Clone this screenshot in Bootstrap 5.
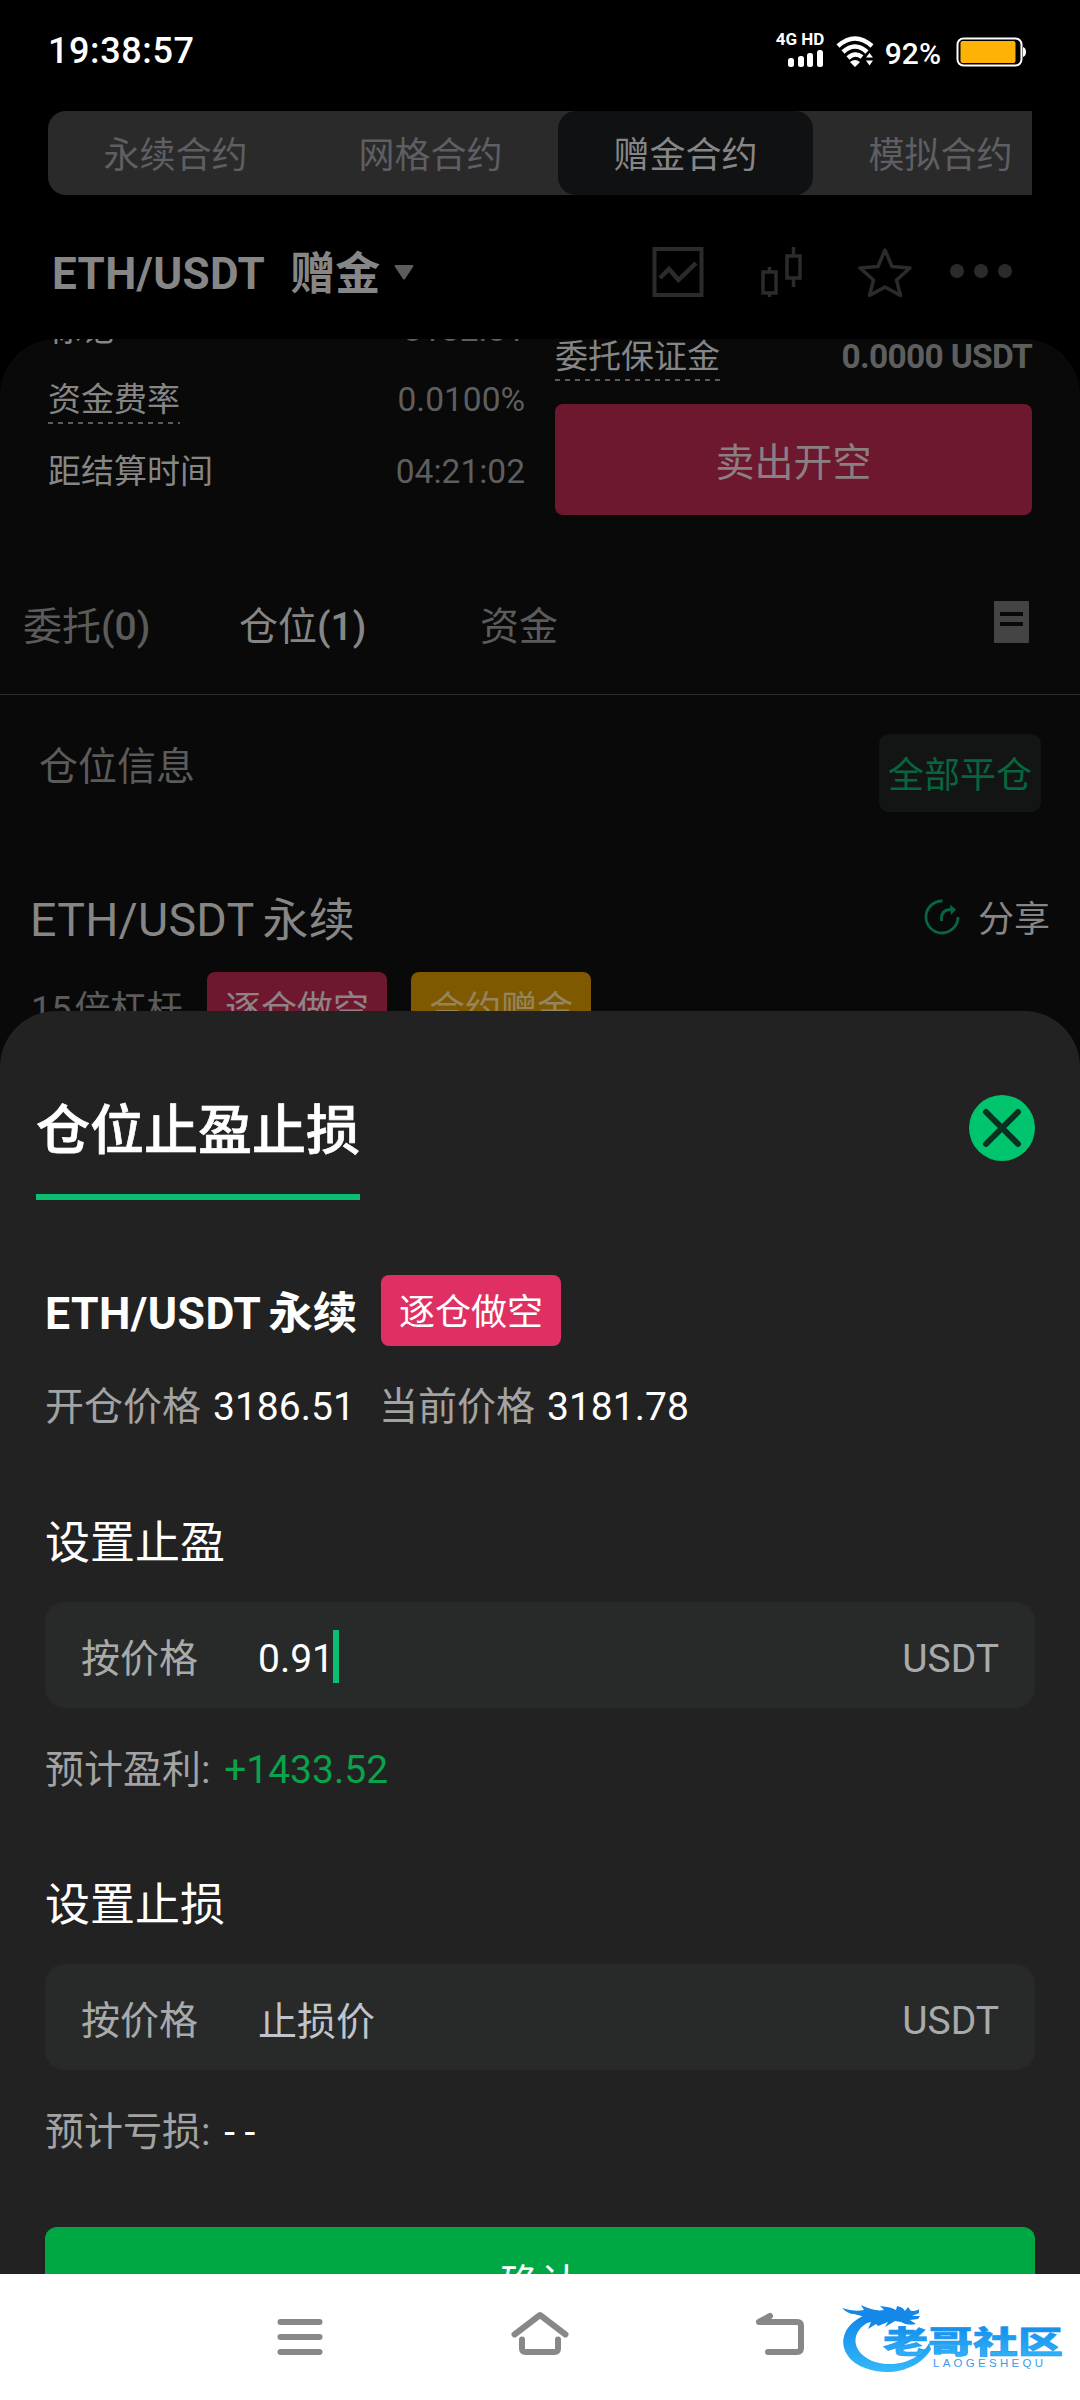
<!DOCTYPE html>
<html lang="zh-CN">
<head>
<meta charset="utf-8">
<meta name="viewport" content="width=device-width, initial-scale=1">
<title>仓位止盈止损</title>
<link href="https://cdn.jsdelivr.net/npm/bootstrap@5.3.0/dist/css/bootstrap.min.css" rel="stylesheet">
<style>
body{background:#000;color:#868686;font-family:Roboto,"Noto Sans CJK SC",sans-serif;font-size:36px;line-height:1.2}
svg{display:block;flex:none}
.screen{width:1080px;height:2400px}
.statusbar{height:100px;padding:0 54px 0 48px;color:#fff}
.clock{font-size:36px;font-weight:500;letter-spacing:.6px;padding-top:4px}
.pct{font-size:30px;font-weight:500;margin-top:7px}
.net{font-size:17px;font-weight:700;line-height:14px;width:48px}
.wifi{margin:3px 11px 0 12px}
.batt{margin:4px 0 0 15px}
.modes{margin:11px 48px 0;height:84px;background:#2a2a2a;border-radius:18px 0 0 18px;color:#5e5e63}
.modes>div{flex:0 0 255px;line-height:90px}
.modes .on{background:#101113;border-radius:18px;color:#868686}
.pairbar{height:144px;padding:12px 64px 0 52px}
.pairname{font-size:44px;font-weight:700;color:#868686;padding-top:3px}
.pairname .latin{letter-spacing:.35px}
.pairname .gift{font-size:45px;margin-left:25px}
.panel{background:#090909;border-radius:56px 56px 0 0;height:1935px}
.cols{padding:0 48px;gap:30px}
.cols>div{width:477px}
.lines{margin-top:-45px}
.ln{height:72px;padding-top:15px;font-size:33px;line-height:42px}
.ln:first-child{height:70px}
.num{color:#5e5e5e}
.ln .num{font-size:33.500px}
.margin-ln .num{font-size:33.500px;letter-spacing:-.7px}
.dash{padding-bottom:3px;background:repeating-linear-gradient(90deg,#5c5c5c 0 5px,transparent 5px 10px) left bottom/100% 2px no-repeat}
.margin-ln{margin-top:-3px;height:68px;font-size:33px;line-height:42px}
.sell{height:111px;background:#6d182f;border-radius:8px;font-size:39px;line-height:118px;color:#8a8083}
.subtabs{margin-top:44px;height:136px;border-bottom:1px solid #2c2c2c;padding:2px 51px 0 23px;font-size:39px;font-weight:500;color:#5b5b5b}
.subtabs>span{width:216px}
.cj{font-weight:400}
.posinfo{padding:39px 39px 0;font-size:39px;color:#5b5b5b}
.closeall{width:162px;height:78px;background:#131515;border-radius:10px;font-size:36px;line-height:84px;color:#07653f}
.posrow{margin-top:79px;height:56px;padding:4px 30px 0}
.posname{font-size:46.500px;color:#868686;letter-spacing:.25px}
.posname .cj{font-size:46px;margin-left:8px}
.lev{margin-top:25px;padding-left:31px;line-height:76px;color:#5b5b5b}
.chip{width:180px;height:71px;border-radius:8px;font-size:36px;line-height:77px}
.sheet{top:1011px;left:0;width:1080px;height:1263px;background:#222;border-radius:56px 56px 0 0;color:#a3a3a3;font-size:39px}
.stitle{width:324px;height:189px;padding-top:88px;border-bottom:6px solid #0abf72;font-size:54px;font-weight:500;line-height:66px;color:#fff;-webkit-text-stroke:.7px #fff}
.sbody{padding:0 45px}
.sname{font-size:44.500px;font-weight:700;color:#fff;width:336px;padding-top:8px;letter-spacing:.45px}
.sname .sc{margin-left:7px;letter-spacing:0}
.w{color:#fff}
.sh{font-size:45px;line-height:60px;color:#fff}
.fld{height:106px;background:#282a29;border-radius:20px;padding:8px 36px 0 36px;line-height:98px;color:#a8abaa}
.fld .lab{width:177px}
.caret{width:6px;height:53px;background:#0abf72;margin:-6px 0 0 -1px}
.ph{color:#c0c4cc;padding-top:2px}
.est{line-height:50px}
.est span{margin-left:4px}
.gr{color:#08a34b}
.ok{height:110px;background:#00a843;border-radius:12px;color:#fff;font-size:40px;line-height:115px}
.navbtm{top:2274px;left:0;width:1080px;height:126px;background:#fff}
</style>
</head>
<body>
<div class="screen position-relative overflow-hidden">
  <div class="statusbar d-flex align-items-center justify-content-between">
    <span class="clock">19:38:57</span>
    <div class="d-flex align-items-center">
      <div class="net text-nowrap">4G HD
        <svg class="mt-1" width="48" height="18"><g fill="#fff"><rect x="12" y="8" width="6" height="9" rx="2.5"/><rect x="22" y="6" width="6" height="11" rx="2.5"/><rect x="31" y="3" width="6" height="14" rx="2.5"/><rect x="41" y="0" width="6" height="17" rx="2.5"/></g></svg>
      </div>
      <svg class="wifi" width="38" height="32" viewBox="0 0 38 32"><g fill="none" stroke="#fff" stroke-width="4.5"><path d="M2 10Q19-5 36 10"/><path d="M7 16Q19 5 31 16"/><path d="M12 22Q19 15.500 26 21"/></g><path d="M14 26q5-4 10 0l-5 5zM30 21.500l3.500-4.500 3.500 4.500zM30 24.500h7l-3.500 5z" fill="#fff"/></svg>
      <span class="pct">92%</span>
      <svg class="batt" width="70" height="32"><rect x="1.500" y="2.500" width="64" height="27" rx="6" fill="none" stroke="#fff" stroke-width="2"/><rect x="4.500" y="5" width="55" height="22" rx="2" fill="#feb206"/><path d="M67 11q3 1 3 5t-3 5z" fill="#fff"/></svg>
    </div>
  </div>

  <div class="modes d-flex overflow-hidden text-center">
    <div>永续合约</div><div>网格合约</div><div class="on">赠金合约</div><div>模拟合约</div>
  </div>

  <div class="pairbar d-flex align-items-center justify-content-between">
    <div class="pairname d-flex align-items-center"><span class="latin">ETH/USDT</span><span class="gift">赠金</span>
      <svg style="margin:-3px 0 0 14px" width="20" height="16"><path d="M1 0h18q1 1 0 2l-8 12q-1 1-2 0L1 2q-1-1 0-2z" fill="#5c5c5c"/></svg></div>
    <svg width="364" height="54" viewBox="652 245 364 54"><g fill="none" stroke="#2b2b2b" stroke-width="4"><rect x="654.500" y="248" width="47" height="46"/><path d="M660 277l9-9 9.500 11L696 262" stroke-width="4.500"/><path d="M763 271h13v21h-13zM769.500 271v-5M769.500 292v4M787 255h13v22h-13zM793.500 255v-9M793.500 277v9" stroke-width="3.500"/><path d="M885 249l7 16.500 18 1.500-13.500 12 4 15.500L885 286l-15.500 8.500 4-15.500L860 267l18-1.500z" stroke-linejoin="round" stroke-width="3.500"/></g><g fill="#2b2b2b"><circle cx="957" cy="270" r="7"/><circle cx="981" cy="270" r="7"/><circle cx="1005" cy="270" r="7"/></g></svg>
  </div>

  <div class="panel overflow-hidden">
    <div class="cols d-flex">
      <div class="lines">
        <div class="ln d-flex justify-content-between align-items-start"><span>标记</span><span class="num">3182.81</span></div>
        <div class="ln d-flex justify-content-between align-items-start"><span class="dash">资金费率</span><span class="num">0.0100%</span></div>
        <div class="ln d-flex justify-content-between align-items-start"><span>距结算时间</span><span class="num">04:21:02</span></div>
      </div>
      <div>
        <div class="margin-ln d-flex justify-content-between align-items-start"><span class="dash">委托保证金</span><b class="num">0.0000 USDT</b></div>
        <div class="sell text-center">卖出开空</div>
      </div>
    </div>

    <div class="subtabs d-flex align-items-center">
      <span><span class="cj">委托</span>(0)</span><span style="color:#868686"><span class="cj">仓位</span>(1)</span><span class="cj" style="margin-left:25px">资金</span>
      <svg class="ms-auto" style="margin-top:-11px" width="35" height="42"><rect width="35" height="42" rx="1" fill="#444"/><path d="M6 11h23v4H6zM6 21h23v4H6z" fill="#090909"/></svg>
    </div>

    <div class="posinfo d-flex justify-content-between align-items-start">
      <span style="margin-top:10px">仓位信息</span><div class="closeall text-center">全部平仓</div>
    </div>

    <div class="posrow d-flex justify-content-between align-items-center">
      <span class="posname">ETH/USDT<span class="cj">永续</span></span>
      <div class="d-flex align-items-center"><svg style="margin:-9px 18px 0 0" width="36" height="36" viewBox="0 0 36 36"><g fill="none" stroke="#07653f" stroke-width="2.800"><path d="M18.500 2A16 16 0 1 0 34 18"/><path d="M17.500 22v-3q0-8 9-8.500h3"/></g><path d="M26 5.500l6 5-5 5.500z" fill="#07653f"/></svg><span style="margin-top:-1px">分享</span></div>
    </div>

    <div class="lev d-flex">
      <span style="width:176px">15<span style="margin-left:3px">倍杠杆</span></span>
      <div class="chip text-center" style="background:#6d182f;color:#8e8487">逐仓做空</div>
      <div class="chip text-center" style="background:#7f5900;color:#94855f;margin-left:24px">合约赠金</div>
    </div>
  </div>

  <div class="sheet position-absolute overflow-hidden">
    <div class="d-flex justify-content-between" style="padding:0 45px 0 36px">
      <div class="stitle text-nowrap">仓位止盈止损</div>
      <svg style="margin-top:84px" width="66" height="66"><circle cx="33" cy="33" r="33" fill="#00c56e"/><path d="M17 17l32 32M49 17L17 49" stroke="#0b3020" stroke-width="6" stroke-linecap="round"/></svg>
    </div>
    <div class="sbody">
      <div class="d-flex align-items-center" style="margin-top:75px">
        <span class="sname text-nowrap">ETH/USDT<span class="sc">永续</span></span><div class="chip text-center text-white" style="background:#df2f63">逐仓做空</div>
      </div>
      <div class="d-flex" style="margin-top:36px;line-height:50px">
        <span>开仓价格</span><span class="w" style="margin-left:12px;width:166px">3186.51</span><span>当前价格</span><span class="w" style="margin-left:12px">3181.78</span>
      </div>
      <div class="sh" style="margin-top:82px">设置止盈</div>
      <div class="fld d-flex align-items-center" style="margin-top:28px"><span class="lab">按价格</span><span class="w">0.91</span><span class="caret"></span><span class="ms-auto">USDT</span></div>
      <div class="est" style="margin-top:37px">预计盈利: <span class="gr">+1433.52</span></div>
      <div class="sh" style="margin-top:81px">设置止损</div>
      <div class="fld d-flex align-items-center" style="margin-top:28px"><span class="lab">按价格</span><span class="ph">止损价</span><span class="ms-auto">USDT</span></div>
      <div class="est" style="margin-top:37px">预计亏损: <span class="w">- -</span></div>
      <div class="ok text-center" style="margin-top:70px">确认</div>
    </div>
  </div>

  <div class="navbtm position-absolute">
    <svg width="1080" height="126" viewBox="0 2274 1080 126">
      <defs><linearGradient id="lg" x1="0" y1="0" x2="0" y2="1"><stop offset="0" stop-color="#0a84e8"/><stop offset="1" stop-color="#35b8fb"/></linearGradient></defs>
      <g fill="none" stroke="#888" stroke-width="6" stroke-linecap="round" stroke-linejoin="round"><path d="M280.500 2322h39M280.500 2337h39M280.500 2352h39M514.500 2334.500l25.500-19.500 25.500 19.500M522 2339.500v9q0 3.500 3.500 3.500h29q3.500 0 3.500-3.500v-9M770 2316l-11 6h38q4 0 4 4v22q0 4-4 4h-29"/></g>
      <path d="M881 2311C835 2318 833 2356 865 2368C890 2378 920 2369 931 2349L929 2343C920 2361 893 2369 872 2361C848 2350 850 2326 879 2318Z" fill="url(#lg)"/>
      <path d="M842 2308q12 4 22 2l-3-5q14 7 23 5l-4-4q12 1 16 4l1-4q6 1 8 5l3-4 3 4q6 0 8-2v4l-7 3h8l-2 3-8 1 6 4q-9 2-15-2l-6-1-10 6 3-5-10 4-2-2-8 5 3-7-10 2 6-6q-8-3-13-4-6 0-12-6z" fill="#1388e8"/>
      <text x="883" y="2353" font-family="'Noto Sans CJK SC'" font-weight="900" font-size="31" textLength="180" lengthAdjust="spacingAndGlyphs" fill="url(#lg)" stroke="#1f98ee" stroke-width=".6">老哥社区</text>
      <text x="933" y="2367" font-family="'Liberation Sans'" font-size="11.500" textLength="110" lengthAdjust="spacing" fill="#3d9bea">LAOGESHEQU</text>
    </svg>
  </div>
</div>
<script src="https://cdn.jsdelivr.net/npm/bootstrap@5.3.0/dist/js/bootstrap.bundle.min.js"></script>
</body>
</html>
